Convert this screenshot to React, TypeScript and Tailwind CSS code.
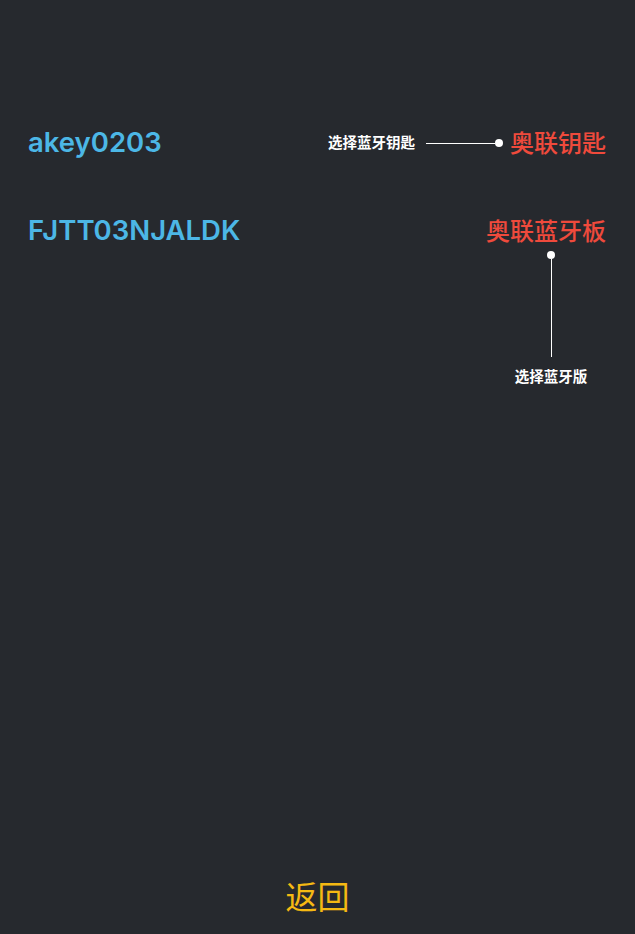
import React from 'react';

const cjk = { fontFamily: '"Noto Sans", "Noto Sans CJK SC", sans-serif' };
const latin = { fontFamily: 'Inter, "Noto Sans CJK SC", sans-serif' };

export default function App() {
  return (
    <div className="flex h-[934px] w-[635px] flex-col bg-[#26292e]" style={cjk}>
      <div className="flex flex-col gap-[48px] pl-[28px] pr-[29px] pt-[123px]">
        <div className="flex h-[40px] items-center justify-between">
          <span className="text-[27.5px] font-semibold leading-none text-[#4cb7e6]" style={latin}>
            akey0203
          </span>
          <div className="flex items-center">
            <span className="text-[14.5px] font-semibold text-white">选择蓝牙钥匙</span>
            <span className="ml-[11px] h-px w-[69px] bg-white" />
            <span className="h-2 w-2 rounded-full bg-white" />
            <span className="ml-[7px] text-[24px] font-medium leading-none text-[#ef4a3c]">奥联钥匙</span>
          </div>
        </div>
        <div className="flex h-[40px] items-center justify-between">
          <span className="text-[27.5px] font-semibold leading-none text-[#4cb7e6]" style={latin}>
            FJTT03NJALDK
          </span>
          <div className="relative flex h-full items-center">
            <span className="text-[24px] font-medium leading-none text-[#ef4a3c]">奥联蓝牙板</span>
            <div className="absolute right-[15px] top-full flex w-[80px] flex-col items-center">
              <span className="h-2 w-2 rounded-full bg-white" />
              <span className="h-[98px] w-px bg-white" />
              <span className="mt-[9px] text-[14.5px] font-semibold leading-[20px] text-white">选择蓝牙版</span>
            </div>
          </div>
        </div>
      </div>
      <div className="flex-1" />
      <div className="mb-[17px] flex h-[40px] items-center justify-center">
        <span className="text-[32px] leading-none text-[#f5b913]">返回</span>
      </div>
    </div>
  );
}
